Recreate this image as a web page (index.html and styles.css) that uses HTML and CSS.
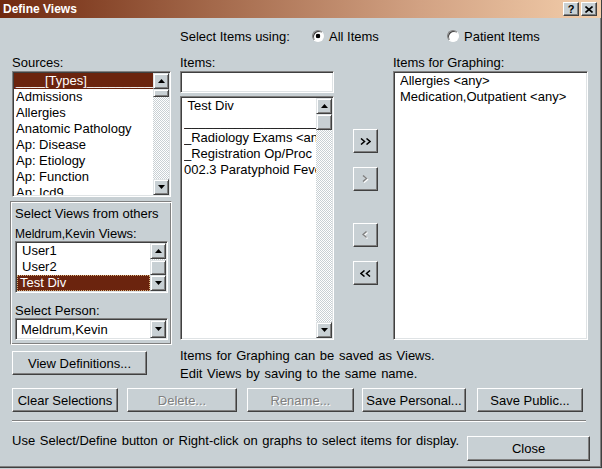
FILE: index.html
```html
<!DOCTYPE html>
<html>
<head>
<meta charset="utf-8">
<title>Define Views</title>
<link rel="stylesheet" href="styles.css">
</head>
<body>
<div class="window">
  <div class="titlebar">
    <span class="title">Define Views</span>
    <div class="caption-btns">
      <span class="cap-btn">?</span>
      <span class="cap-btn"><svg width="8" height="7" viewBox="0 0 8 7"><path d="M0.5 0.5 L7.5 6.5 M7.5 0.5 L0.5 6.5" stroke="#000" stroke-width="1.6"/></svg></span>
    </div>
  </div>
  <div class="content">
    <div class="radio-row">
      <span class="radio-label">Select Items using:</span>
      <span class="radio-opt opt1"><span class="radio checked"></span>All Items</span>
      <span class="radio-opt"><span class="radio"></span>Patient Items</span>
    </div>

    <div class="main">
      <div class="col-left">
        <div class="label">Sources:</div>
        <div class="sunken listbox sources">
          <div class="list-items">
            <div class="row sel">____[Types]__________________</div>
            <div class="row">Admissions</div>
            <div class="row">Allergies</div>
            <div class="row">Anatomic Pathology</div>
            <div class="row">Ap: Disease</div>
            <div class="row">Ap: Etiology</div>
            <div class="row">Ap: Function</div>
            <div class="row">Ap: Icd9</div>
          </div>
          <div class="vscroll">
            <div class="sb-btn"><svg width="7" height="4" viewBox="0 0 7 4"><polygon points="0,4 3.5,0 7,4" fill="#000"/></svg></div>
            <div class="sb-thumb thumb-small"></div>
            <div class="sb-track"></div>
            <div class="sb-btn"><svg width="7" height="4" viewBox="0 0 7 4"><polygon points="0,0 7,0 3.5,4" fill="#000"/></svg></div>
          </div>
        </div>

        <div class="group">
          <div class="g-line">Select Views from others</div>
          <div class="g-line g-line2"><span class="small">Meldrum,Kevin</span> Views:</div>
          <div class="sunken listbox views">
            <div class="list-items views-items">
              <div class="row">User1</div>
              <div class="row">User2</div>
              <div class="row sel focus">Test Div</div>
            </div>
            <div class="vscroll">
              <div class="sb-btn"><svg width="7" height="4" viewBox="0 0 7 4"><polygon points="0,4 3.5,0 7,4" fill="#000"/></svg></div>
              <div class="sb-track thin"></div>
              <div class="sb-thumb thumb-fill"></div>
              <div class="sb-btn"><svg width="7" height="4" viewBox="0 0 7 4"><polygon points="0,0 7,0 3.5,4" fill="#000"/></svg></div>
            </div>
          </div>
          <div class="g-line g-label">Select Person:</div>
          <div class="sunken combo">
            <span class="combo-text">Meldrum,Kevin</span>
            <div class="sb-btn combo-btn"><svg width="7" height="4" viewBox="0 0 7 4"><polygon points="0,0 7,0 3.5,4" fill="#000"/></svg></div>
          </div>
        </div>

        <div class="btn viewdef">View Definitions...</div>
      </div>

      <div class="col-mid">
        <div class="label">Items:</div>
        <div class="sunken edit"></div>
        <div class="sunken listbox items">
          <div class="list-items">
            <div class="row">&nbsp;Test Div</div>
            <div class="row">__________________________________</div>
            <div class="row">_Radiology Exams &lt;any&gt;</div>
            <div class="row">_Registration Op/Proc</div>
            <div class="row">002.3 Paratyphoid Fever</div>
          </div>
          <div class="vscroll">
            <div class="sb-btn"><svg width="7" height="4" viewBox="0 0 7 4"><polygon points="0,4 3.5,0 7,4" fill="#000"/></svg></div>
            <div class="sb-thumb"></div>
            <div class="sb-track"></div>
            <div class="sb-btn"><svg width="7" height="4" viewBox="0 0 7 4"><polygon points="0,0 7,0 3.5,4" fill="#000"/></svg></div>
          </div>
        </div>
        <div class="info">
          <div>Items for Graphing can be saved as Views.</div>
          <div>Edit Views by saving to the same name.</div>
        </div>
      </div>

      <div class="col-arrows">
        <div class="btn arrow"><svg width="11" height="7" viewBox="0 0 11 7"><path d="M1 0.5 L4.5 3.5 L1 6.5 M6.5 0.5 L10 3.5 L6.5 6.5" fill="none" stroke="#000" stroke-width="1.5"/></svg></div>
        <div class="btn arrow gap-big-before"><svg width="7" height="8" viewBox="0 0 7 8"><path d="M2 1.5 L5.5 4.5 L2 7.5" fill="none" stroke="#fff" stroke-width="1.4"/><path d="M1 0.5 L4.5 3.5 L1 6.5" fill="none" stroke="#808080" stroke-width="1.4"/></svg></div>
        <div class="btn arrow gap-large"><svg width="7" height="8" viewBox="0 0 7 8"><path d="M5.5 1.5 L2 4.5 L5.5 7.5" fill="none" stroke="#fff" stroke-width="1.4"/><path d="M4.5 0.5 L1 3.5 L4.5 6.5" fill="none" stroke="#808080" stroke-width="1.4"/></svg></div>
        <div class="btn arrow gap-big-before"><svg width="11" height="7" viewBox="0 0 11 7"><path d="M4.5 0.5 L1 3.5 L4.5 6.5 M10 0.5 L6.5 3.5 L10 6.5" fill="none" stroke="#000" stroke-width="1.5"/></svg></div>
      </div>

      <div class="col-right">
        <div class="label">Items for Graphing:</div>
        <div class="sunken listbox graphing">
          <div class="list-items graph-items">
            <div class="row">Allergies &lt;any&gt;</div>
            <div class="row">Medication,Outpatient &lt;any&gt;</div>
          </div>
        </div>
      </div>
    </div>

    <div class="btn-row">
      <div class="btn b-clear">Clear Selections</div>
      <div class="btn disabled b-delete">Delete...</div>
      <div class="btn disabled b-rename">Rename...</div>
      <div class="btn b-personal">Save Personal...</div>
      <div class="btn b-public">Save Public...</div>
    </div>

    <div class="separator"></div>

    <div class="footer">
      <div class="footer-text">Use Select/Define button or Right-click on graphs to select items for display.</div>
      <div class="btn b-close">Close</div>
    </div>
  </div>
</div>
</body>
</html>
```

FILE: styles.css
```css
body {
  margin: 0;
  background: #c8d0d4;
}

.window {
  width: 602px;
  height: 468px;
  box-sizing: border-box;
  background: #c8d0d4;
  border-right: 1px solid #404040;
  border-bottom: 1px solid #404040;
  box-shadow: inset -1px -1px #808080;
  font-family: "Liberation Sans", Arial, sans-serif;
  font-size: 13px;
  color: #000;
}

.titlebar {
  height: 18px;
  display: flex;
  align-items: center;
  background: linear-gradient(90deg, #70290f 0%, #a3684a 35%, #d2a283 70%, #f3ceab 100%);
}

.title {
  color: #fff;
  font-weight: bold;
  font-size: 12px;
  padding-left: 3px;
}

.caption-btns {
  margin-left: auto;
  margin-right: 4px;
  display: flex;
  gap: 2px;
}

.cap-btn {
  width: 16px;
  height: 14px;
  box-sizing: border-box;
  background: #c8d0d4;
  border: 1px solid;
  border-color: #fff #404040 #404040 #fff;
  box-shadow: inset -1px -1px #808080;
  display: flex;
  align-items: center;
  justify-content: center;
  font-weight: bold;
  font-size: 11px;
  line-height: 12px;
}

.content {
  padding-left: 12px;
}

.radio-row {
  display: flex;
  align-items: center;
  height: 16px;
  margin-top: 10px;
  padding-left: 168px;
}

.radio-label {
  width: 132px;
}

.radio-opt {
  display: flex;
  align-items: center;
  gap: 5px;
}

.opt1 {
  width: 135px;
}

.radio {
  width: 12px;
  height: 12px;
  box-sizing: border-box;
  border-radius: 50%;
  background: #fff;
  border: 1px solid;
  border-color: #808080 #fff #fff #808080;
  box-shadow: inset 1px 1px #404040;
}

.radio.checked {
  background: radial-gradient(circle, #000 0 2px, #fff 2.6px);
}

.main {
  display: flex;
  margin-top: 11px;
}

.label {
  height: 16px;
  line-height: 16px;
}

.col-left {
  width: 159px;
  display: flex;
  flex-direction: column;
}

.sunken {
  box-sizing: border-box;
  background: #fff;
  border: 1px solid;
  border-color: #808080 #fff #fff #808080;
  box-shadow: inset 1px 1px #404040, inset -1px -1px #dfe3e5;
  padding: 1px;
}

.listbox {
  display: flex;
  overflow: hidden;
}

.list-items {
  flex: 1;
  min-width: 0;
  overflow: hidden;
  padding-left: 2px;
}

.row {
  height: 16px;
  line-height: 16px;
  white-space: nowrap;
  overflow: hidden;
}

.row.sel {
  background: #6b240e;
  color: #fff;
  margin-left: -2px;
  padding-left: 2px;
}

.vscroll {
  width: 16px;
  flex: none;
  display: flex;
  flex-direction: column;
  background: repeating-conic-gradient(#fff 0 25%, #c8d0d4 0 50%) 0 0 / 2px 2px;
}

.sb-btn,
.sb-thumb {
  width: 16px;
  height: 16px;
  flex: none;
  box-sizing: border-box;
  background: #c8d0d4;
  border: 1px solid;
  border-color: #dfe3e5 #404040 #404040 #dfe3e5;
  box-shadow: inset 1px 1px #fff, inset -1px -1px #808080;
  display: flex;
  align-items: center;
  justify-content: center;
}

.sb-track {
  flex: 1;
}

.sb-track.thin {
  flex: none;
  height: 1px;
}

.thumb-small {
  height: 8px;
}

.thumb-fill {
  flex: 1;
  height: auto;
}

.sources {
  height: 126px;
}

.group {
  margin-top: 4px;
  margin-left: -2px;
  width: 162px;
  height: 144px;
  box-sizing: border-box;
  border: 1px solid;
  border-color: #808080 #fff #fff #808080;
  box-shadow: inset 1px 1px #fff, inset -1px -1px #808080;
  padding: 4px 3px 4px 4px;
}

.g-line {
  height: 15px;
  line-height: 15px;
  white-space: nowrap;
}

.g-line2 {
  margin-top: 5px;
}

.small {
  font-size: 12px;
}

.views {
  height: 52px;
}

.views-items {
  padding-left: 0;
}

.views-items .row {
  padding-left: 5px;
}

.views-items .row.sel {
  margin-left: 0;
  padding-left: 3px;
  outline: 1px dotted #d6b27c;
  outline-offset: -1px;
}

.g-label {
  margin-top: 10px;
}

.combo {
  height: 22px;
  display: flex;
  align-items: center;
}

.combo-text {
  flex: 1;
  padding-left: 4px;
}

.combo-btn {
  height: 18px;
  align-self: stretch;
}

.btn {
  box-sizing: border-box;
  background: #c8d0d4;
  border: 1px solid;
  border-color: #fff #404040 #404040 #fff;
  box-shadow: inset -1px -1px #808080;
  display: flex;
  align-items: center;
  justify-content: center;
  white-space: nowrap;
}

.btn.disabled {
  color: #808080;
  text-shadow: 1px 1px #fff;
}

.viewdef {
  margin-top: 6px;
  width: 135px;
  height: 24px;
}

.col-mid {
  margin-left: 9px;
  width: 154px;
  display: flex;
  flex-direction: column;
}

.edit {
  height: 22px;
}

.items {
  margin-top: 3px;
  height: 244px;
}

.info {
  margin-top: 7px;
  line-height: 18px;
  white-space: nowrap;
  word-spacing: 1px;
}

.col-arrows {
  margin-left: 19px;
  width: 25px;
  display: flex;
  flex-direction: column;
  padding-top: 74px;
}

.arrow {
  width: 25px;
  height: 24px;
}

.gap-big-before {
  margin-top: 14px;
}

.gap-large {
  margin-top: 32px;
}

.col-right {
  margin-left: 15px;
  width: 195px;
  display: flex;
  flex-direction: column;
}

.graphing {
  height: 269px;
}

.graph-items {
  padding-left: 5px;
}

.btn-row {
  display: flex;
  margin-top: 5px;
}

.btn-row .btn {
  height: 24px;
}

.b-clear {
  width: 106px;
}

.b-delete {
  width: 110px;
  margin-left: 9px;
}

.b-rename {
  width: 107px;
  margin-left: 10px;
}

.b-personal {
  width: 104px;
  margin-left: 8px;
}

.b-public {
  width: 106px;
  margin-left: 11px;
}

.separator {
  margin-top: 8px;
  width: 574px;
  height: 2px;
  box-sizing: border-box;
  border-top: 1px solid #808080;
  border-bottom: 1px solid #fff;
}

.footer {
  margin-top: 11px;
  display: flex;
  align-items: flex-start;
}

.footer-text {
  line-height: 15px;
  white-space: nowrap;
  word-spacing: 1px;
}

.b-close {
  margin-left: auto;
  margin-right: 11px;
  margin-top: 3px;
  width: 123px;
  height: 25px;
}
```
